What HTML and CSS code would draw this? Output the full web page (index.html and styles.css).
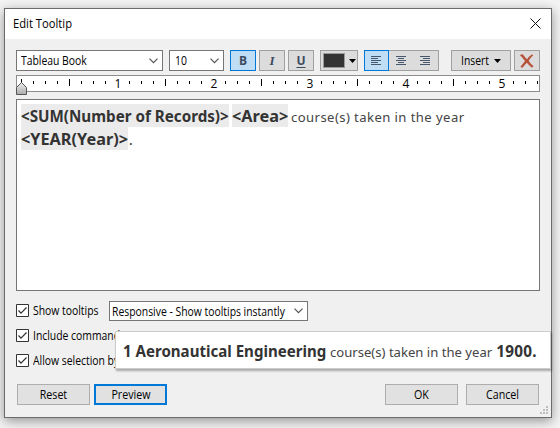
FILE: index.html
```html
<!DOCTYPE html>
<html lang="en">
<head>
<meta charset="utf-8">
<title>Edit Tooltip</title>
<link rel="stylesheet" href="styles.css">
</head>
<body>
<main class="dialog">
  <header class="titlebar">
    <h1>Edit Tooltip</h1>
    <svg class="close" width="11" height="11" viewBox="0 0 11 11"><path d="M.5.5l10 10M10.5.5l-10 10" stroke="#111" fill="none"/></svg>
  </header>
  <section class="content">
    <div class="toolbar">
      <div class="combo font"><span class="narrow">Tableau Book</span><svg width="9" height="6" viewBox="0 0 9 6"><path d="M.5.7l4 4 4-4" stroke="#555" stroke-width="1.2" fill="none"/></svg></div>
      <div class="combo size"><span class="narrow">10</span><svg width="9" height="6" viewBox="0 0 9 6"><path d="M.5.7l4 4 4-4" stroke="#555" stroke-width="1.2" fill="none"/></svg></div>
      <div class="tool bold active">B</div>
      <div class="tool italic">I</div>
      <div class="tool under">U</div>
      <div class="tool color"><i class="swatch"></i><svg width="7" height="4" viewBox="0 0 7 4"><path d="M0 0h7L3.5 4z"/></svg></div>
      <div class="aligns">
        <div class="align active"><svg width="11" height="10" viewBox="0 0 11 10"><path d="M0 .5h10M0 2.5h7M0 4.5h10M0 6.5h7M0 8.5h10" stroke="#46566b"/></svg></div>
        <div class="align"><svg width="11" height="10" viewBox="0 0 11 10"><path d="M0 .5h10M2 2.5h6M0 4.5h10M2 6.5h6M0 8.5h10" stroke="#46566b"/></svg></div>
        <div class="align"><svg width="11" height="10" viewBox="0 0 11 10"><path d="M0 .5h10M3 2.5h7M0 4.5h10M3 6.5h7M0 8.5h10" stroke="#46566b"/></svg></div>
      </div>
      <div class="tool insert"><span class="narrow">Insert</span><svg width="7" height="4" viewBox="0 0 7 4"><path d="M0 0h7L3.5 4z"/></svg></div>
      <div class="tool clear"><svg width="14" height="14" viewBox="0 0 14 14"><path d="M0 1.2Q1.500-.3 3.200.8Q5 3.500 7 5.200Q9 2.500 12 .3L13.200 1.200Q10.200 4 8.700 6.700Q10.500 10 13.500 12L12 13.700Q9 11.500 6.900 8.700Q4.500 11 2.500 13.700L.3 13Q3 9.500 5 6.900Q3 4 0 1.200Z" fill="#b6523a"/></svg></div>
    </div>
    <svg class="ruler" width="524" height="20" viewBox="0 0 524 20">
      <defs>
        <linearGradient id="g" x2="0" y2="1"><stop stop-color="#eee"/><stop offset="1" stop-color="#aaa"/></linearGradient>
        <pattern id="ticks" x="5" width="96" height="20" patternUnits="userSpaceOnUse"><path d="M.5 6v3M12.500 6v3M24.500 6v3M36.500 6v3M48.500 4v7M60.500 6v3M72.500 6v3M84.500 6v3" stroke="#000"/></pattern>
      </defs>
      <rect x=".5" y=".5" width="523" height="16" fill="#fff" stroke="#8d8d8d"/>
      <rect x="5" y="1" width="518" height="15" fill="url(#ticks)"/>
      <path d="M96 3h11v11h-11zM192 3h11v11h-11zM288 3h11v11h-11zM384 3h11v11h-11zM480 3h11v11h-11z" fill="#fff"/>
      <g class="nums"><text x="102" y="13">1</text><text x="198" y="13">2</text><text x="294" y="13">3</text><text x="390" y="13">4</text><text x="486" y="13">5</text></g>
      <path d="M5.500 4v4" stroke="#000"/><path d="M.5 19.500v-7L5.500 7.500l5 5v7z" fill="url(#g)" stroke="#555"/>
    </svg>
    <div class="editor">
      <p><b class="field sum"><span>&lt;SUM(Number of Records)&gt;</span></b><b class="field area"><span>&lt;Area&gt;</span></b><span class="course">course(s) taken in the year</span></p>
      <p><b class="field year"><span>&lt;YEAR(Year)&gt;</span></b><span class="dot">.</span></p>
    </div>
    <div class="options">
      <div class="option"><svg class="check" width="13" height="13" viewBox="0 0 13 13"><path d="M.5.5h12v12H.5z" fill="#fff" stroke="#333"/><path d="M2.500 6.500l2.500 2.700 5.500-5.700" fill="none" stroke="#333" stroke-width="1.250"/></svg><span class="narrow show">Show tooltips</span>
        <div class="combo mode"><span class="narrow">Responsive - Show tooltips instantly</span><svg width="9" height="6" viewBox="0 0 9 6"><path d="M.5.7l4 4 4-4" stroke="#555" stroke-width="1.200" fill="none"/></svg></div></div>
      <div class="option"><svg class="check" width="13" height="13" viewBox="0 0 13 13"><path d="M.5.5h12v12H.5z" fill="#fff" stroke="#333"/><path d="M2.500 6.500l2.500 2.700 5.500-5.700" fill="none" stroke="#333" stroke-width="1.250"/></svg><span class="narrow">Include command</span></div>
      <div class="option"><svg class="check" width="13" height="13" viewBox="0 0 13 13"><path d="M.5.5h12v12H.5z" fill="#fff" stroke="#333"/><path d="M2.500 6.500l2.500 2.700 5.500-5.700" fill="none" stroke="#333" stroke-width="1.250"/></svg><span class="narrow">Allow selection by</span></div>
    </div>
    <footer class="buttons">
      <div class="button"><span>Reset</span></div>
      <div class="button focus"><span>Preview</span></div>
      <div class="button ok"><span>OK</span></div>
      <div class="button"><span>Cancel</span></div>
    </footer>
  </section>
  <svg class="grip" width="8" height="8" viewBox="0 0 8 8"><path d="M6 0h2v2H6zM3 3h2v2H3zM6 3h2v2H6zM0 6h2v2H0zM3 6h2v2H3zM6 6h2v2H6z" fill="#bdbdbd"/></svg>
  <div class="tooltip"><b class="aero"><span>1 Aeronautical Engineering</span></b><span class="course">course(s) taken in the year</span><b class="y1900">1900.</b></div>
</main>
</body>
</html>
```

FILE: styles.css
```css
* { box-sizing: border-box; }
body { margin: 0; width: 560px; height: 428px; overflow: hidden; background: #f4f4f4; font: 12px/16px "Open Sans", "Noto Sans", sans-serif; color: #000; padding: 8px 0 0 4px; }
svg { display: block; flex: none; }
.dialog { position: relative; width: 548px; height: 410px; border: 1px solid #6b6b6b; background: #f0f0f0; box-shadow: 0 3px 11px rgba(0,0,0,.4); }
.titlebar { height: 30px; background: #fff; display: flex; align-items: center; justify-content: space-between; padding: 0 10px 0 8px; }
h1 { margin: 0; font-size: 12px; font-weight: 400; transform: scaleX(.935); transform-origin: left; }
.close { margin-top: -2px; }
.narrow { display: block; transform: scaleX(.865); transform-origin: left; min-width: 0; }
.content { padding: 11px 11px 0; }
.toolbar { display: flex; height: 21px; }
.combo { display: flex; align-items: center; justify-content: space-between; height: 21px; background: #fff; border: 1px solid #767676; padding: 0 4px 0 4px; white-space: nowrap; }
.combo .narrow { margin-top: 1px; }
.font { width: 147px; }
.size { width: 55px; margin-left: 6px; padding-left: 5px; }
.tool { width: 26px; height: 21px; margin-left: 3px; border: 1px solid #a0a0a0; background: #dcdcdc; display: flex; align-items: center; justify-content: center; white-space: nowrap; }
.tool.active, .align.active { background: #bfddf5; border-color: #0078d7; }
.tool.bold { margin-left: 6px; }
.bold, .italic, .under { color: #3d4b5f; font-weight: 700; }
.italic { font-family: "Liberation Serif", serif; font-style: italic; font-size: 13px; }
.under { text-decoration: underline; text-underline-offset: 2px; }
.color { width: 38px; margin-left: 6px; justify-content: space-between; padding: 0 1px 0 2px; }
.swatch { width: 22px; height: 15px; background: #333; border: 1px solid #999; }
.aligns { display: flex; width: 75px; margin-left: 6px; border: 1px solid #a0a0a0; background: #dcdcdc; }
.align { width: 25px; height: 19px; display: flex; align-items: center; justify-content: center; }
.align.active { height: 21px; margin: -1px 0 0 -1px; border: 1px solid #0078d7; }
.tool.insert { width: 60px; margin-left: 12px; justify-content: flex-start; padding-left: 9px; }
.insert .narrow { width: 33px; margin-top: 1px; }
.ruler { margin-top: 4px; }
.nums { font: 12px "Open Sans", sans-serif; text-anchor: middle; }
.editor { margin-top: 4px; width: 524px; height: 192px; border: 1px solid #767676; background: #fff; padding: 4px; color: #333; }
.editor p { margin: 0; display: flex; height: 23px; align-items: baseline; white-space: nowrap; }
b { font: 700 15px/23px "Noto Sans", sans-serif; color: #333; }
.field { display: block; background: #ebebeb; height: 23px; font-size: 15.5px; line-height: 25px; }
.field span, .aero span { display: block; width: max-content; transform-origin: left; }
.sum { width: 208px; }
.sum span { transform: scaleX(.98); }
.area { width: 56px; margin: 0 3px; }
.area span { transform: scaleX(1.05); }
.year { width: 107px; }
.year span { transform: scaleX(1.05); }
.course, .dot { font: 13.1px/23px "Noto Sans", sans-serif; color: #444; }
.dot { margin-left: 1px; font-weight: 600; }
.editor .course { letter-spacing: .42px; }
.options { margin-top: 13px; height: 63px; }
.option { display: flex; height: 25px; white-space: nowrap; }
.option > .narrow { margin: -1px 0 0 4px; }
.option .show { width: 76px; flex: none; }
.mode { width: 199px; height: 20px; margin-top: -3px; padding-left: 2px; }
.mode .narrow { width: 180px; }
.buttons { display: flex; margin: 17px 0 0 1px; }
.button { width: 73px; height: 21px; display: flex; align-items: center; justify-content: center; border: 1px solid #adadad; background: #e1e1e1; }
.button span { transform: scaleX(.89); }
.focus { margin-left: 4px; border: 2px solid #0078d7; }
.ok { margin: 0 8px 0 218px; }
.grip { position: absolute; right: 3px; bottom: 3px; }
.tooltip { position: absolute; left: 110px; top: 322px; width: 436px; height: 38px; background: #fff; border: 1px solid #ccc; box-shadow: 1px 2px 2px rgba(0,0,0,.3); display: flex; align-items: baseline; padding: 8px 0 0 7px; white-space: nowrap; }
.tooltip b { font-size: 15.3px; }
.aero { width: 207px; }
.aero span { transform: scaleX(.985); }
.y1900 { margin-left: 4px; letter-spacing: .3px; }
```
